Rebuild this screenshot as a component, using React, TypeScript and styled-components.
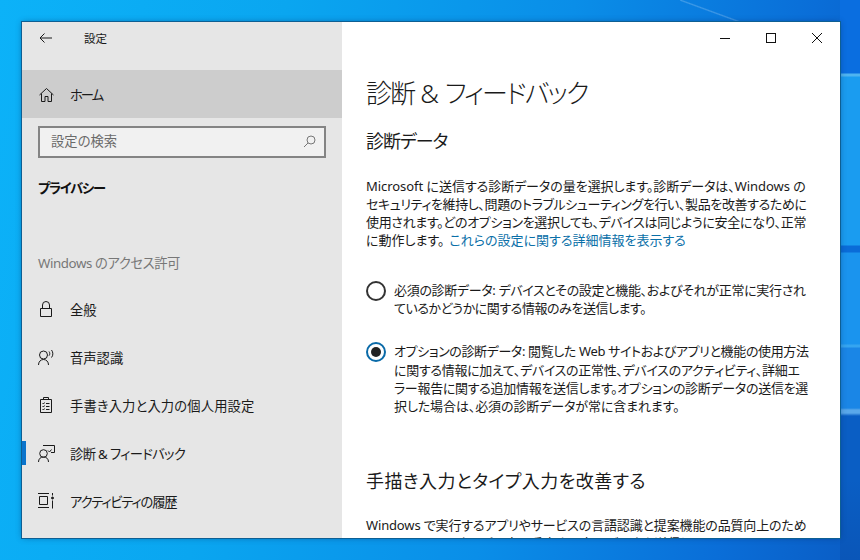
import React from "react";
import styled, { createGlobalStyle } from "styled-components";

const GlobalStyle = createGlobalStyle`
  html, body {
    margin: 0;
    padding: 0;
    width: 860px;
    height: 560px;
    overflow: hidden;
  }
  body {
    font-family: "Noto Sans", "Noto Sans CJK JP", sans-serif;
    font-feature-settings: "palt";
    color: #1a1a1a;
  }
`;

const Desktop = styled.div`
  width: 860px;
  height: 560px;
  box-sizing: border-box;
  padding: 22px 20px 22px 22px;
  background:
    linear-gradient(to top right, transparent 47%, rgba(255, 255, 255, 0.22) 50%, transparent 53%) 680px 0 / 60px 22px no-repeat,
    linear-gradient(
        180deg,
        #0a6ee0 0 73px,
        #4fb4f0 74px 76px,
        #1a9cf0 77px 245px,
        #0a6cd8 246px 252px,
        #1a94ee 253px 344px,
        #35a5f0 345px 347px,
        #1a86e6 348px 408px,
        #5aa8ea 410px 413px,
        #0a5ec4 416px 480px,
        #0a56b8 100%
      )
      right / 20px 100% no-repeat,
    linear-gradient(100deg, #0cb2f8 0%, #0aa6f0 30%, #0a8ee8 60%, #0a6ed8 85%, #0a5cc4 100%);
`;

const Window = styled.div`
  display: flex;
  height: 516px;
  overflow: hidden;
  box-shadow: 0 0 0 1px #0e5f93, 0 0 6px rgba(0, 40, 90, 0.45);
`;

const Sidebar = styled.aside`
  flex: 0 0 320px;
  display: flex;
  flex-direction: column;
  background: #e6e6e6;
`;

const TitleBar = styled.div`
  display: flex;
  align-items: center;
  box-sizing: border-box;
  height: 48px;
  padding: 0 0 16px 16px;
  flex: none;
`;

const BackButton = styled.svg`
  width: 16px;
  height: 16px;
  flex: none;
`;

const AppTitle = styled.span`
  margin-left: 30px;
  font-size: 11.5px;
`;

const HomeRow = styled.div`
  display: flex;
  align-items: center;
  height: 48px;
  padding-left: 16px;
  background: #cdcdcd;
  flex: none;
`;

const IconSlot = styled.svg`
  width: 18px;
  height: 18px;
  flex: none;
  fill: none;
  stroke: #1a1a1a;
  stroke-width: 1;
`;

const NavLabel = styled.span<{ $spacing?: number }>`
  margin-left: 14px;
  font-size: 13.3px;
  white-space: nowrap;
  letter-spacing: ${(p) => p.$spacing ?? 0}px;
`;

const SearchBox = styled.div`
  display: flex;
  align-items: center;
  justify-content: space-between;
  box-sizing: border-box;
  height: 32px;
  margin: 8px 16px 0;
  padding: 0 8px 3px 11px;
  background: #f1f1f1;
  border: 2px solid #848484;
  font-size: 13.3px;
  color: #6a6a6a;
  flex: none;
`;

const SearchIcon = styled.svg`
  width: 13px;
  height: 13px;
  fill: none;
  stroke: #777;
  position: relative;
  top: 1px;
`;

const SectionTitle = styled.div`
  margin: 18px 0 0 16px;
  height: 24px;
  line-height: 24px;
  font-size: 13.3px;
  font-weight: 700;
  letter-spacing: -1.3px;
  color: #111;
`;

const GroupLabel = styled.div`
  margin: 51px 0 0 16px;
  height: 24px;
  line-height: 24px;
  font-size: 13.3px;
  letter-spacing: -0.4px;
  color: #777;
`;

const NavList = styled.nav`
  display: flex;
  flex-direction: column;
  margin-top: 10px;
`;

const NavItem = styled.div<{ $active?: boolean }>`
  display: flex;
  align-items: center;
  height: 48px;
  padding-left: 16px;
  position: relative;

  ${(p) =>
    p.$active &&
    `
    &::before {
      content: "";
      position: absolute;
      left: 0;
      top: 12px;
      width: 4px;
      height: 24px;
      background: #0a74cc;
    }
  `}
`;

const Content = styled.main`
  flex: 1;
  min-width: 0;
  background: #fff;
  display: flex;
  flex-direction: column;
  overflow: hidden;
`;

const WindowControls = styled.div`
  display: flex;
  justify-content: flex-end;
  height: 32px;
  flex: none;
`;

const ControlButton = styled.div`
  width: 46px;
  height: 32px;
  display: flex;
  align-items: center;
  justify-content: center;
`;

const ControlIcon = styled.svg`
  width: 12px;
  height: 12px;
  fill: none;
  stroke: #111;
  stroke-width: 1;
`;

const Body = styled.div`
  padding: 0 24px;
`;

const PageTitle = styled.h1`
  margin: 17px 0 0;
  font-size: 26px;
  line-height: 44px;
  font-weight: 300;
  letter-spacing: -1.9px;
  color: #1a1a1a;
  white-space: nowrap;
`;

const Ampersand = styled.span`
  margin: 0 6px;
  letter-spacing: 0;
`;

const Heading = styled.h2<{ $spacing?: number }>`
  margin: 11px 0 0;
  font-size: 18px;
  line-height: 30px;
  font-weight: 400;
  letter-spacing: ${(p) => p.$spacing ?? -1}px;
  color: #1a1a1a;
  white-space: nowrap;
`;

const Paragraph = styled.p`
  margin: 21px 0 0;
  font-size: 13px;
  line-height: 18px;
`;

const Line = styled.span<{ $spacing?: number }>`
  display: block;
  white-space: nowrap;
  letter-spacing: ${(p) => p.$spacing ?? 0}px;
`;

const LinkText = styled.span`
  margin-left: 5px;
  color: #0a6fa8;
`;

const RadioRow = styled.div<{ $gap: number }>`
  display: flex;
  margin-top: ${(p) => p.$gap}px;
  font-size: 13px;
  line-height: 18.2px;
`;

const RadioCircle = styled.span<{ $checked?: boolean }>`
  flex: none;
  box-sizing: border-box;
  width: 20px;
  height: 20px;
  margin-right: 8px;
  border-radius: 50%;
  border: 2px solid ${(p) => (p.$checked ? "#0a6aa8" : "#333")};
  display: flex;
  align-items: center;
  justify-content: center;

  &::after {
    content: "";
    display: ${(p) => (p.$checked ? "block" : "none")};
    width: 10px;
    height: 10px;
    border-radius: 50%;
    background: #222;
  }
`;

const RadioText = styled.div`
  min-width: 0;
`;

const TrailingHeading = styled(Heading)`
  margin-top: 51px;
`;

const ClippedParagraph = styled(Paragraph)`
  margin-top: 20px;
`;

export default function App() {
  return (
    <>
      <GlobalStyle />
      <Desktop>
        <Window>
          <Sidebar>
            <TitleBar>
              <BackButton viewBox="0 0 16 16" fill="none" stroke="#1a1a1a">
                <path d="M2 8H14M6.5 3.5 2 8l4.500 4.500" />
              </BackButton>
              <AppTitle>設定</AppTitle>
            </TitleBar>
            <HomeRow>
              <IconSlot viewBox="0 0 18 18">
                <path d="M1.500 10 8.500 3.500l7 6.500M3.500 8.500v8H7v-5h3v5h3.500v-8" />
              </IconSlot>
              <NavLabel $spacing={-2}>ホーム</NavLabel>
            </HomeRow>
            <SearchBox>
              <span>設定の検索</span>
              <SearchIcon viewBox="0 0 13 13">
                <circle cx="8" cy="5" r="4" />
                <path d="M5 8 1 12" />
              </SearchIcon>
            </SearchBox>
            <SectionTitle>プライバシー</SectionTitle>
            <GroupLabel>Windows のアクセス許可</GroupLabel>
            <NavList>
              <NavItem>
                <IconSlot viewBox="0 0 18 18">
                  <path d="M2.500 8.500h11v8h-11zM4.500 8.500V5a3.500 3.500 0 0 1 7 0v3.500" />
                </IconSlot>
                <NavLabel>全般</NavLabel>
              </NavItem>
              <NavItem>
                <IconSlot viewBox="0 0 18 18">
                  <circle cx="5.500" cy="7" r="4" />
                  <path d="M.5 17c0-3.200 2-5.500 5-5.500s5 2.300 5 5.500M11 3.500c1 1.200 1 3 0 4.200M13.500 2c1.800 2.200 1.800 5.500 0 7.500" />
                </IconSlot>
                <NavLabel>音声認識</NavLabel>
              </NavItem>
              <NavItem>
                <IconSlot viewBox="0 0 18 18">
                  <path d="M2.500 3.500h11v13h-11zM5.500 3.500v-2h5v2M4.500 7l1 1 1-1.500M8 7.500h3.500M4.500 10l1 1 1-1.500M8 10.500h3.500M4.500 13l1 1 1-1.500M8 13.500h3.500" />
                </IconSlot>
                <NavLabel $spacing={0.15}>手書き入力と入力の個人用設定</NavLabel>
              </NavItem>
              <NavItem $active>
                <IconSlot viewBox="0 0 18 18">
                  <circle cx="5.500" cy="9.500" r="3.800" />
                  <path d="M.5 18c0-3.200 2-5 5-5s5 1.800 5 5M5 1.500h11.500v7H13M10 6.500l1.500 1.500 2-2.500" />
                </IconSlot>
                <NavLabel $spacing={-0.65}>診断 &amp; フィードバック</NavLabel>
              </NavItem>
              <NavItem>
                <IconSlot viewBox="0 0 18 18">
                  <path d="M0 1.500h11M0 15.500h11M1.500 4.500h8v8h-8zM14.500 1v2.500M14.500 8.500v8" />
                  <circle cx="14.500" cy="6" r="1" fill="#1a1a1a" />
                </IconSlot>
                <NavLabel $spacing={-1.2}>アクティビティの履歴</NavLabel>
              </NavItem>
            </NavList>
          </Sidebar>
          <Content>
            <WindowControls>
              <ControlButton>
                <ControlIcon viewBox="0 0 12 12">
                  <path d="M1 6.500h10" />
                </ControlIcon>
              </ControlButton>
              <ControlButton>
                <ControlIcon viewBox="0 0 12 12">
                  <rect x="1.500" y="1.500" width="9" height="9" />
                </ControlIcon>
              </ControlButton>
              <ControlButton>
                <ControlIcon viewBox="0 0 12 12">
                  <path d="M1 1l10 10M11 1 1 11" />
                </ControlIcon>
              </ControlButton>
            </WindowControls>
            <Body>
              <PageTitle>
                診断<Ampersand>&amp;</Ampersand>フィードバック
              </PageTitle>
              <Heading>診断データ</Heading>
              <Paragraph>
                <Line $spacing={-0.05}>Microsoft に送信する診断データの量を選択します。診断データは、Windows の</Line>
                <Line $spacing={-0.38}>セキュリティを維持し、問題のトラブルシューティングを行い、製品を改善するために</Line>
                <Line $spacing={-0.33}>使用されます。どのオプションを選択しても、デバイスは同じように安全になり、正常</Line>
                <Line>
                  に動作します。<LinkText>これらの設定に関する詳細情報を表示する</LinkText>
                </Line>
              </Paragraph>
              <RadioRow $gap={32}>
                <RadioCircle />
                <RadioText>
                  <Line $spacing={-0.32}>必須の診断データ: デバイスとその設定と機能、およびそれが正常に実行され</Line>
                  <Line $spacing={-0.45}>ているかどうかに関する情報のみを送信します。</Line>
                </RadioText>
              </RadioRow>
              <RadioRow $gap={25}>
                <RadioCircle $checked />
                <RadioText>
                  <Line $spacing={-0.37}>オプションの診断データ: 閲覧した Web サイトおよびアプリと機能の使用方法</Line>
                  <Line $spacing={-0.3}>に関する情報に加えて、デバイスの正常性、デバイスのアクティビティ、詳細エ</Line>
                  <Line $spacing={-0.3}>ラー報告に関する追加情報を送信します。オプションの診断データの送信を選</Line>
                  <Line $spacing={-0.1}>択した場合は、必須の診断データが常に含まれます。</Line>
                </RadioText>
              </RadioRow>
              <TrailingHeading $spacing={0.45}>手描き入力とタイプ入力を改善する</TrailingHeading>
              <ClippedParagraph>
                <Line $spacing={-0.15}>Windows で実行するアプリやサービスの言語認識と提案機能の品質向上のため</Line>
                <Line>に、Microsoft にタイプ入力と手書き入力のデータを送信します。</Line>
              </ClippedParagraph>
            </Body>
          </Content>
        </Window>
      </Desktop>
    </>
  );
}
